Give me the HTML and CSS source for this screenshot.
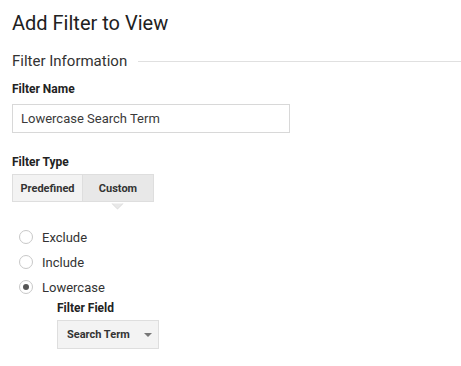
FILE: index.html
```html
<!DOCTYPE html>
<html>
<head>
<meta charset="utf-8">
<link rel="stylesheet" href="styles.css">
</head>
<body>
<div class="page">
  <h1 class="title">Add Filter to View</h1>
  <div class="section-head">
    <span class="section-title">Filter Information</span>
    <span class="section-line"></span>
  </div>
  <div class="label">Filter Name</div>
  <div class="input">Lowercase Search Term</div>
  <div class="label type-label">Filter Type</div>
  <div class="seg">
    <div class="seg-btn">Predefined</div>
    <div class="seg-btn active">Custom</div>
  </div>
  <div class="radios">
    <div class="radio-row"><span class="radio"></span><span class="radio-text">Exclude</span></div>
    <div class="radio-row"><span class="radio"></span><span class="radio-text">Include</span></div>
    <div class="radio-row"><span class="radio checked"></span><span class="radio-text">Lowercase</span></div>
  </div>
  <div class="sub">
    <div class="label">Filter Field</div>
    <div class="select"><span>Search Term</span><span class="caret"></span></div>
  </div>
</div>
</body>
</html>
```
FILE: styles.css
```css
html, body { margin: 0; padding: 0; background: #fff; }
body { font-family: Roboto, "Noto Sans", Arial, sans-serif; color: #222; }
.page { padding: 11px 0 0 12px; }
.title { margin: 0; font-size: 20px; font-weight: 400; line-height: 24px; color: #212121; }
.section-head { display: flex; align-items: center; margin-top: 17px; height: 18px; }
.section-title { font-size: 15px; font-weight: 400; color: #333; line-height: 18px; }
.section-line { flex: 1; height: 1px; background: #e0e0e0; margin-left: 11px; margin-top: 1px; }
.label { font-size: 12px; font-weight: 700; color: #222; line-height: 14px; }
.section-head + .label { margin-top: 12px; }
.input { box-sizing: border-box; width: 278px; height: 29px; margin-top: 8px; border: 1px solid #d8d8d8; padding: 0 8px; font-size: 13px; line-height: 27px; color: #3a3a3a; }
.type-label { margin-top: 22px; }
.seg { display: flex; margin-top: 5px; }
.seg-btn { box-sizing: border-box; height: 28px; width: 71px; display: flex; align-items: center; justify-content: center; font-size: 11px; font-weight: 700; color: #333; background: #f3f3f3; border: 1px solid #dedede; }
.seg-btn + .seg-btn { border-left: none; }
.seg-btn.active { background: #e8e8e8; position: relative; }
.seg-btn.active::after { content: ""; position: absolute; left: 50%; bottom: -7px; width: 8px; height: 8px; margin-left: -5px; background: #e8e8e8; border-right: 1px solid #dedede; border-bottom: 1px solid #dedede; transform: rotate(45deg); clip-path: polygon(100% 0, 100% 100%, 0 100%); }
.radios { margin-top: 28px; padding-left: 7px; display: flex; flex-direction: column; gap: 11px; }
.radio-row { display: flex; align-items: center; height: 14px; }
.radio { box-sizing: border-box; width: 14px; height: 14px; border-radius: 50%; border: 1px solid #c8c8c8; background: #fff; display: inline-block; position: relative; }
.radio.checked::after { content: ""; position: absolute; left: 3px; top: 3px; width: 6px; height: 6px; border-radius: 50%; background: #555; }
.radio-text { margin-left: 9px; font-size: 13px; color: #333; }
.sub { padding-left: 45px; margin-top: 7px; }
.select { box-sizing: border-box; width: 102px; height: 29px; margin-top: 5px; background: #f3f3f3; border: 1px solid #dedede; display: flex; align-items: center; padding-left: 9px; font-size: 11px; font-weight: 700; color: #333; }
.caret { width: 0; height: 0; border-left: 4px solid transparent; border-right: 4px solid transparent; border-top: 4px solid #777; margin-left: 14px; }
```
